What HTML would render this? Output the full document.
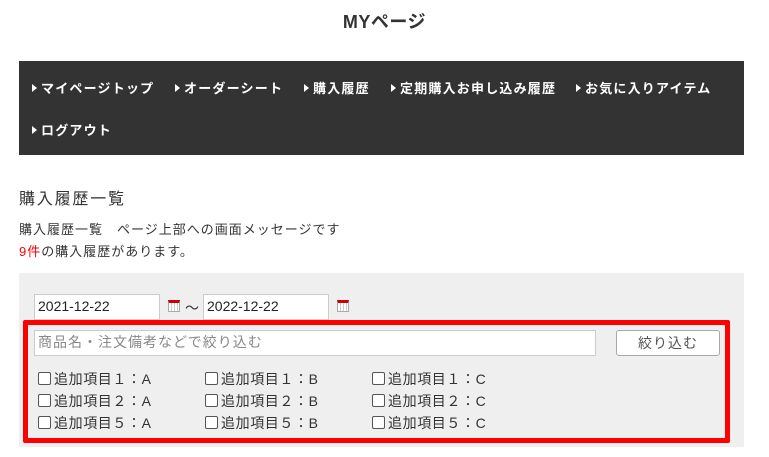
<!DOCTYPE html>
<html><head><meta charset="utf-8"><style>
*{box-sizing:border-box;margin:0;padding:0}
body{width:769px;height:457px;background:#fff;font-family:"Liberation Sans","Noto Sans CJK JP",sans-serif;color:#333;position:relative;overflow:hidden}
.a{position:absolute;white-space:nowrap}
h1{position:absolute;left:0;width:769px;top:8px;text-align:center;font-size:18px;font-weight:bold;color:#333;letter-spacing:0.5px}
.nav{position:absolute;left:19px;top:61px;width:725px;height:94px;background:#333}
.nav span{position:absolute;color:#fff;font-size:13px;font-weight:bold;white-space:nowrap;letter-spacing:1.2px}
.nav span:before{content:"";display:inline-block;border-left:5px solid #fff;border-top:4px solid transparent;border-bottom:4px solid transparent;margin-right:4px;vertical-align:1px}
.panel{position:absolute;left:19px;top:273px;width:725px;height:174px;background:#efefef}
.inp{position:absolute;background:#fff;border:1px solid #ccc;font-size:14px;padding-left:3px;line-height:23px;color:#222}
.cal{position:absolute;width:12px;height:12px;border:1px solid #aaa;border-top:3px solid #c00;background:repeating-linear-gradient(90deg,#fff 0 2px,#ccc 2px 3px)}
.red{position:absolute;left:23px;top:320px;width:707px;height:123px;border:5px solid #f00;border-radius:2px}
.cb{position:absolute;font-size:14px;color:#333;white-space:nowrap;letter-spacing:0.6px}
.cb:before{content:"";display:inline-block;width:11px;height:11px;border:1px solid #555;border-radius:2px;background:#fff;margin-right:3px;vertical-align:-1px}
</style></head><body>
<h1>MYページ</h1>
<div class="nav">
<span style="left:13px;top:17px">マイページトップ</span>
<span style="left:156px;top:17px">オーダーシート</span>
<span style="left:285px;top:17px">購入履歴</span>
<span style="left:372px;top:17px">定期購入お申し込み履歴</span>
<span style="left:557px;top:17px">お気に入りアイテム</span>
<span style="left:13px;top:59px">ログアウト</span>
</div>
<div class="a" style="left:19px;top:185px;font-size:16px;letter-spacing:1.8px">購入履歴一覧</div>
<div class="a" style="left:19px;top:219px;font-size:13px;letter-spacing:1px">購入履歴一覧　ページ上部への画面メッセージです</div>
<div class="a" style="left:19px;top:241px;font-size:13px;letter-spacing:1px"><span style="color:#f00">9件</span>の購入履歴があります。</div>
<div class="panel"></div>
<div class="inp" style="left:34px;top:294px;width:126px;height:26px">2021-12-22</div>
<div class="cal" style="left:168px;top:300px"></div>
<div class="a" style="left:185px;top:298px;font-size:14px">～</div>
<div class="inp" style="left:203px;top:294px;width:126px;height:26px">2022-12-22</div>
<div class="cal" style="left:337px;top:300px"></div>
<div class="red"></div>
<div class="inp" style="left:34px;top:330px;width:562px;height:26px;color:#888;letter-spacing:1px">商品名・注文備考などで絞り込む</div>
<div class="a" style="left:616px;top:330px;width:104px;height:26px;border:1px solid #aaa;border-radius:3px;background:#fff;text-align:center;font-size:14px;line-height:24px;color:#555;letter-spacing:1px">絞り込む</div>
<div class="cb" style="left:38px;top:369px">追加項目１：A</div>
<div class="cb" style="left:205px;top:369px">追加項目１：B</div>
<div class="cb" style="left:372px;top:369px">追加項目１：C</div>
<div class="cb" style="left:38px;top:391px">追加項目２：A</div>
<div class="cb" style="left:205px;top:391px">追加項目２：B</div>
<div class="cb" style="left:372px;top:391px">追加項目２：C</div>
<div class="cb" style="left:38px;top:413px">追加項目５：A</div>
<div class="cb" style="left:205px;top:413px">追加項目５：B</div>
<div class="cb" style="left:372px;top:413px">追加項目５：C</div>
</body></html>
